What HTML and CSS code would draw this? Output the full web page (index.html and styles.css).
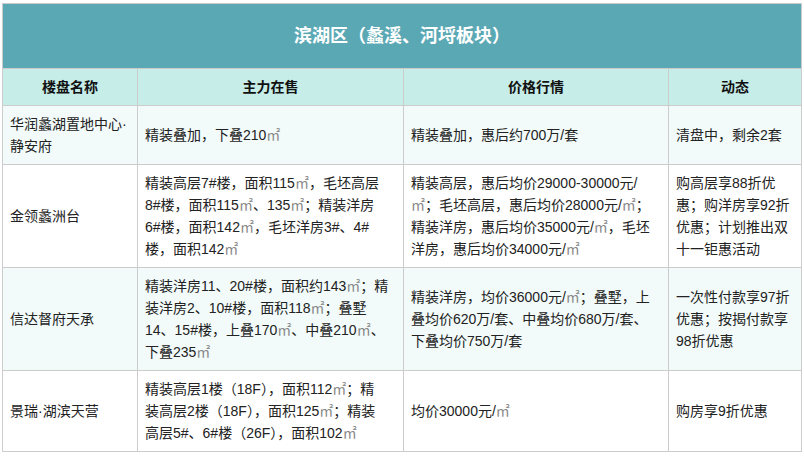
FILE: index.html
```html
<!DOCTYPE html>
<html lang="zh-CN">
<head>
<meta charset="utf-8">
<title>滨湖区（蠡溪、河埒板块）</title>
<link rel="stylesheet" href="styles.css">
</head>
<body>
<div class="page">
<table class="sales">
  <colgroup>
    <col class="c-name">
    <col class="c-main">
    <col class="c-price">
    <col class="c-deal">
  </colgroup>
  <thead>
    <tr><th colspan="4" class="title">滨湖区（蠡溪、河埒板块）</th></tr>
    <tr class="head">
      <th>楼盘名称</th>
      <th>主力在售</th>
      <th>价格行情</th>
      <th>动态</th>
    </tr>
  </thead>
  <tbody>
    <tr class="alt">
      <td>华润蠡湖置地中心·<br>静安府</td>
      <td>精装叠加，下叠210<span class="u">㎡</span></td>
      <td>精装叠加，惠后约700万/套</td>
      <td>清盘中，剩余2套</td>
    </tr>
    <tr>
      <td>金领蠡洲台</td>
      <td>精装高层7#楼，面积115<span class="u">㎡</span>，毛坯高层<br>8#楼，面积115<span class="u">㎡</span>、135<span class="u">㎡</span>；精装洋房<br>6#楼，面积142<span class="u">㎡</span>，毛坯洋房3#、4#<br>楼，面积142<span class="u">㎡</span></td>
      <td>精装高层，惠后均价29000-30000元/<br><span class="u">㎡</span>；毛坯高层，惠后均价28000元/<span class="u">㎡</span>；<br>精装洋房，惠后均价35000元/<span class="u">㎡</span>，毛坯<br>洋房，惠后均价34000元/<span class="u">㎡</span></td>
      <td>购高层享88折优<br>惠；购洋房享92折<br>优惠；计划推出双<br>十一钜惠活动</td>
    </tr>
    <tr class="alt">
      <td>信达督府天承</td>
      <td>精装洋房11、20#楼，面积约143<span class="u">㎡</span>；精<br>装洋房2、10#楼，面积118<span class="u">㎡</span>；叠墅<br>14、15#楼，上叠170<span class="u">㎡</span>、中叠210<span class="u">㎡</span>、<br>下叠235<span class="u">㎡</span></td>
      <td>精装洋房，均价36000元/<span class="u">㎡</span>；叠墅，上<br>叠均价620万/套、中叠均价680万/套、<br>下叠均价750万/套</td>
      <td>一次性付款享97折<br>优惠；按揭付款享<br>98折优惠</td>
    </tr>
    <tr>
      <td>景瑞·湖滨天营</td>
      <td>精装高层1楼（18F），面积112<span class="u">㎡</span>；精<br>装高层2楼（18F），面积125<span class="u">㎡</span>；精装<br>高层5#、6#楼（26F），面积102<span class="u">㎡</span></td>
      <td>均价30000元/<span class="u">㎡</span></td>
      <td>购房享9折优惠</td>
    </tr>
  </tbody>
</table>
</div>
</body>
</html>
```

FILE: styles.css
```css
body {
  margin: 0;
  background: #ffffff;
}

.page {
  padding: 3px 0 0 2px;
}

.sales {
  border-collapse: collapse;
  table-layout: fixed;
  width: 799px;
  font-family: "Liberation Sans", "Noto Sans CJK SC", sans-serif;
  font-size: 14px;
  line-height: 22px;
  color: #222222;
}

.c-name { width: 135px; }
.c-main { width: 266px; }
.c-price { width: 265px; }
.c-deal { width: 133px; }

.sales th,
.sales td {
  border: 1px solid #cccccc;
  padding: 7px 7px;
  vertical-align: middle;
  text-align: left;
  white-space: nowrap;
}

.sales .title {
  background: #5ba8b5;
  color: #ffffff;
  font-size: 18px;
  font-weight: bold;
  text-align: center;
  padding: 21px 7px;
}

.head th {
  background: #c6ede8;
  color: #111111;
  font-weight: bold;
  text-align: center;
}

.alt td {
  background: #f2fbfa;
}

.u {
  color: #888888;
}
```
